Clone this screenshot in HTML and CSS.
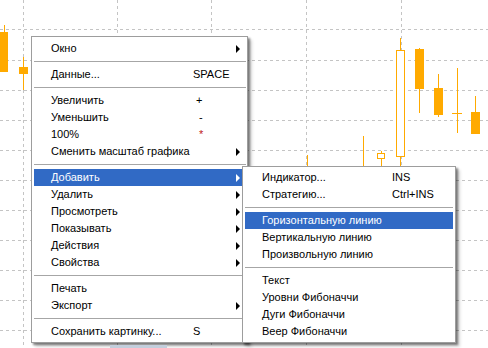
FILE: index.html
```html
<!DOCTYPE html>
<html>
<head>
<meta charset="utf-8">
<link rel="stylesheet" href="styles.css">
</head>
<body>
<div class="screen">
  <svg class="chart" width="488" height="348" viewBox="0 0 488 348">
    <g class="grid">
      <line x1="0" y1="29.5" x2="488" y2="29.5"/>
      <line x1="0" y1="60.5" x2="488" y2="60.5"/>
      <line x1="0" y1="90.5" x2="488" y2="90.5"/>
      <line x1="0" y1="120.5" x2="488" y2="120.5"/>
      <line x1="0" y1="150.5" x2="488" y2="150.5"/>
      <line x1="0" y1="180.5" x2="488" y2="180.5"/>
      <line x1="0" y1="210.5" x2="488" y2="210.5"/>
      <line x1="0" y1="240.5" x2="488" y2="240.5"/>
      <line x1="0" y1="270.5" x2="488" y2="270.5"/>
      <line x1="0" y1="300.5" x2="488" y2="300.5"/>
      <line x1="0" y1="330.5" x2="488" y2="330.5"/>
      <line x1="23.5" y1="0" x2="23.5" y2="348"/>
      <line x1="117.5" y1="0" x2="117.5" y2="348"/>
      <line x1="211.5" y1="0" x2="211.5" y2="348"/>
      <line x1="306.5" y1="0" x2="306.5" y2="348"/>
      <line x1="401.5" y1="0" x2="401.5" y2="348"/>
    </g>
    <g class="wicks">
      <line x1="4.5" y1="25" x2="4.5" y2="32"/>
      <line x1="23.5" y1="57" x2="23.5" y2="90"/>
      <line x1="307.5" y1="155" x2="307.5" y2="200"/>
      <line x1="363.5" y1="136" x2="363.5" y2="200"/>
      <line x1="381.5" y1="151" x2="381.5" y2="200"/>
      <line x1="400.5" y1="38" x2="400.5" y2="200"/>
      <line x1="419.5" y1="48" x2="419.5" y2="113"/>
      <line x1="438.5" y1="74" x2="438.5" y2="117"/>
      <line x1="457.5" y1="68" x2="457.5" y2="133"/>
      <line x1="452" y1="113.5" x2="462" y2="113.5"/>
      <line x1="475.5" y1="96" x2="475.5" y2="112"/>
    </g>
    <g class="bodies">
      <rect x="0" y="32" width="8" height="40"/>
      <rect x="19" y="67" width="9" height="7"/>
      <rect x="415" y="49" width="9" height="40"/>
      <rect x="434" y="88" width="9" height="27"/>
      <rect x="471" y="112" width="9" height="22"/>
    </g>
    <g class="hollow">
      <rect x="377.5" y="153.5" width="7" height="5"/>
      <rect x="396.5" y="50.5" width="8" height="106"/>
    </g>
  </svg>

  <div class="menu main-menu">
    <div class="item"><span class="label">Окно</span><span class="key"></span><span class="arrow"></span></div>
    <div class="sep"></div>
    <div class="item"><span class="label">Данные...</span><span class="key">SPACE</span><span class="noarrow"></span></div>
    <div class="sep"></div>
    <div class="item"><span class="label">Увеличить</span><span class="key">&nbsp;+</span><span class="noarrow"></span></div>
    <div class="item"><span class="label">Уменьшить</span><span class="key">&nbsp;&nbsp;-</span><span class="noarrow"></span></div>
    <div class="item"><span class="label">100%</span><span class="key star">&nbsp;&nbsp;*</span><span class="noarrow"></span></div>
    <div class="item"><span class="label">Сменить масштаб графика</span><span class="key"></span><span class="arrow"></span></div>
    <div class="sep"></div>
    <div class="item active"><span class="label">Добавить</span><span class="key"></span><span class="arrow"></span></div>
    <div class="item"><span class="label">Удалить</span><span class="key"></span><span class="arrow"></span></div>
    <div class="item"><span class="label">Просмотреть</span><span class="key"></span><span class="arrow"></span></div>
    <div class="item"><span class="label">Показывать</span><span class="key"></span><span class="arrow"></span></div>
    <div class="item"><span class="label">Действия</span><span class="key"></span><span class="arrow"></span></div>
    <div class="item"><span class="label">Свойства</span><span class="key"></span><span class="arrow"></span></div>
    <div class="sep"></div>
    <div class="item"><span class="label">Печать</span><span class="key"></span><span class="noarrow"></span></div>
    <div class="item"><span class="label">Экспорт</span><span class="key"></span><span class="arrow"></span></div>
    <div class="sep"></div>
    <div class="item"><span class="label">Сохранить картинку...</span><span class="key">S</span><span class="noarrow"></span></div>
  </div>

  <div class="menu sub-menu">
    <div class="item"><span class="label">Индикатор...</span><span class="key">INS</span></div>
    <div class="item"><span class="label">Стратегию...</span><span class="key">Ctrl+INS</span></div>
    <div class="sep"></div>
    <div class="item active"><span class="label">Горизонтальную линию</span><span class="key"></span></div>
    <div class="item"><span class="label">Вертикальную линию</span><span class="key"></span></div>
    <div class="item"><span class="label">Произвольную линию</span><span class="key"></span></div>
    <div class="sep"></div>
    <div class="item"><span class="label">Текст</span><span class="key"></span></div>
    <div class="item"><span class="label">Уровни Фибоначчи</span><span class="key"></span></div>
    <div class="item"><span class="label">Дуги Фибоначчи</span><span class="key"></span></div>
    <div class="item"><span class="label">Веер Фибоначчи</span><span class="key"></span></div>
  </div>

  <div class="strip"></div>
</div>
</body>
</html>
```

FILE: styles.css
```css
html, body {
  margin: 0;
  padding: 0;
  background: #ffffff;
}

.screen {
  position: relative;
  width: 488px;
  height: 348px;
  overflow: hidden;
  background: #ffffff;
  font-family: "Liberation Sans", Arial, sans-serif;
  font-size: 11px;
  color: #000000;
}

.chart {
  position: absolute;
  left: 0;
  top: 0;
}

.grid line {
  stroke: #c4c4c4;
  stroke-width: 1;
  stroke-dasharray: 3 3;
}

.wicks line {
  stroke: #ffaa00;
  stroke-width: 1;
}

.bodies rect {
  fill: #ffaa00;
}

.hollow rect {
  fill: #ffffff;
  stroke: #ffaa00;
  stroke-width: 1;
}

.menu {
  position: absolute;
  box-sizing: border-box;
  background: #ffffff;
  border: 1px solid #9d9d9d;
  box-shadow: 2px 2px 2px rgba(0, 0, 0, 0.45), 4px 4px 3px rgba(0, 0, 0, 0.15);
  display: flex;
  flex-direction: column;
}

.main-menu {
  left: 31px;
  top: 36px;
  width: 217px;
  padding: 3px 1px 2px 2px;
}

.sub-menu {
  left: 242px;
  top: 166px;
  width: 214px;
  padding: 2px 2px 2px 2px;
}

.item {
  display: flex;
  align-items: center;
  height: 17px;
  line-height: 17px;
  padding-left: 17px;
  white-space: nowrap;
}

.main-menu .label {
  width: 142px;
}

.sub-menu .label {
  width: 130px;
}

.key {
  flex: 1;
}

.star {
  color: #c02020;
}

.arrow,
.noarrow {
  width: 0;
  height: 0;
  margin-right: 6px;
  border-top: 4px solid transparent;
  border-bottom: 4px solid transparent;
  border-left: 4px solid transparent;
}

.arrow {
  border-left-color: #000000;
}

.item.active {
  background: #316ac5;
  color: #ffffff;
}

.item.active .arrow {
  border-left-color: #ffffff;
}

.sep {
  height: 9px;
  display: flex;
  align-items: center;
}

.sep::before {
  content: "";
  display: block;
  width: 100%;
  height: 1px;
  background: #a6a6a6;
}

.strip {
  position: absolute;
  left: 110px;
  top: 345px;
  width: 57px;
  height: 3px;
  background: #c3cedc;
}
```
